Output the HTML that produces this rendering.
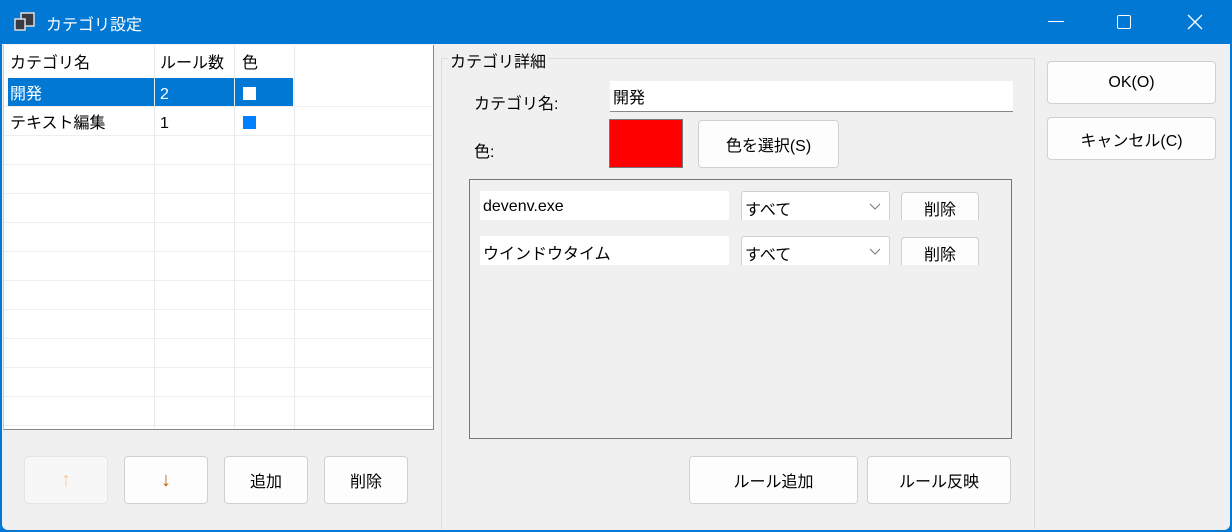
<!DOCTYPE html>
<html><head><meta charset="utf-8"><style>
*{box-sizing:border-box;margin:0;padding:0}
body{width:1232px;height:532px;overflow:hidden;background:#0078d4;font-family:"Liberation Sans","Noto Sans CJK JP",sans-serif;font-size:16px;color:#000;position:relative}
.abs{position:absolute}
.win{position:absolute;left:2px;top:44px;width:1228px;height:486px;background:#f0f0f0;border-radius:0 0 6px 6px}
.btn{position:absolute;background:#fdfdfd;border:1px solid #d0d0d0;border-radius:4px;display:flex;align-items:center;justify-content:center;font-size:16px}
.inp{position:absolute;background:#fff;border-bottom:1px solid #888;display:flex;align-items:center;padding-left:3px}
.cell{position:absolute;height:29px;line-height:29px;padding-left:8px}
.hl{position:absolute;left:4px;width:428px;height:1px;background:#eee}
</style></head><body>
<svg class="abs" style="left:14px;top:12px" width="22" height="20" viewBox="0 0 22 20"><rect x="7" y="1" width="13" height="13" fill="#3a3a44" stroke="#ddd" stroke-width="1.5"/><rect x="1" y="7" width="10" height="11" fill="#3a3a44" stroke="#ddd" stroke-width="1.5"/></svg>
<div class="abs" style="left:46px;top:11px;color:#fff;font-size:16px">カテゴリ設定</div>
<div class="abs" style="left:1048px;top:21px;width:16px;height:1px;background:#fff"></div>
<div class="abs" style="left:1117px;top:15px;width:14px;height:14px;border:1.5px solid #fff;border-radius:2px"></div>
<svg class="abs" style="left:1187px;top:14px" width="16" height="16"><path d="M1 1L15 15M15 1L1 15" stroke="#fff" stroke-width="1.3"/></svg>
<div class="win"></div>
<div class="abs" style="left:3px;top:45px;width:431px;height:385px;background:#fff;border-right:1px solid #888;border-bottom:1px solid #888;border-left:1px solid #ccc"></div>
<div class="abs" style="left:8px;top:78px;width:285px;height:29px;background:#0078d4"></div>
<div class="abs" style="left:154px;top:46px;width:1px;height:383px;background:#eaeaea"></div>
<div class="abs" style="left:234px;top:46px;width:1px;height:383px;background:#eaeaea"></div>
<div class="abs" style="left:294px;top:46px;width:1px;height:383px;background:#eaeaea"></div>
<div class="hl" style="top:106px"></div><div class="hl" style="top:135px"></div><div class="hl" style="top:164px"></div><div class="hl" style="top:193px"></div><div class="hl" style="top:222px"></div><div class="hl" style="top:251px"></div><div class="hl" style="top:280px"></div><div class="hl" style="top:309px"></div><div class="hl" style="top:338px"></div><div class="hl" style="top:367px"></div><div class="hl" style="top:396px"></div><div class="hl" style="top:425px"></div>
<div class="cell" style="left:2px;top:49px">カテゴリ名</div>
<div class="cell" style="left:152px;top:49px">ルール数</div>
<div class="cell" style="left:234px;top:49px">色</div>
<div class="cell" style="left:2px;top:80px;color:#fff">開発</div>
<div class="cell" style="left:152px;top:80px;color:#fff">2</div>
<div class="abs" style="left:243px;top:87px;width:13px;height:13px;background:#fff"></div>
<div class="cell" style="left:2px;top:109px">テキスト編集</div>
<div class="cell" style="left:152px;top:109px">1</div>
<div class="abs" style="left:243px;top:116px;width:13px;height:13px;background:#0080ff"></div>
<div class="btn" style="left:24px;top:456px;width:84px;height:48px;background:#f7f7f7;border-color:#e5e5e5;color:#f4c9a0;font-size:20px">↑</div>
<div class="btn" style="left:124px;top:456px;width:84px;height:48px;color:#c0600a;font-size:20px">↓</div>
<div class="btn" style="left:224px;top:456px;width:84px;height:48px">追加</div>
<div class="btn" style="left:324px;top:456px;width:84px;height:48px">削除</div>
<div class="abs" style="left:441px;top:58px;width:594px;height:471px;border:1px solid #dcdcdc;border-bottom:none"></div>
<div class="abs" style="left:448px;top:48px;background:#f0f0f0;padding:0 2px;font-size:16px">カテゴリ詳細</div>
<div class="abs" style="left:474px;top:90px">カテゴリ名:</div>
<div class="inp" style="left:610px;top:81px;width:403px;height:31px">開発</div>
<div class="abs" style="left:474px;top:138px">色:</div>
<div class="abs" style="left:609px;top:119px;width:74px;height:49px;background:#f00;border:1px solid #777"></div>
<div class="btn" style="left:698px;top:120px;width:141px;height:48px">色を選択(S)</div>
<div class="abs" style="left:469px;top:179px;width:543px;height:260px;border:1px solid #777"></div>
<div class="inp" style="left:480px;top:191px;width:249px;height:29px;border:none;padding-top:3px">devenv.exe</div>
<div class="inp" style="left:741px;top:191px;width:149px;height:29px;border:1px solid #d0d0d0;border-bottom:none;border-radius:3px 3px 0 0;padding-top:3px">すべて</div>
<svg class="abs" style="left:869px;top:203px" width="12" height="8"><path d="M1 1L6 6L11 1" stroke="#777" fill="none"/></svg>
<div class="btn" style="left:901px;top:192px;width:78px;height:28px;border-bottom:none;border-radius:4px 4px 0 0;padding-top:3px">削除</div>
<div class="inp" style="left:480px;top:236px;width:249px;height:29px;border:none;padding-top:3px">ウインドウタイム</div>
<div class="inp" style="left:741px;top:236px;width:149px;height:29px;border:1px solid #d0d0d0;border-bottom:none;border-radius:3px 3px 0 0;padding-top:3px">すべて</div>
<svg class="abs" style="left:869px;top:248px" width="12" height="8"><path d="M1 1L6 6L11 1" stroke="#777" fill="none"/></svg>
<div class="btn" style="left:901px;top:237px;width:78px;height:28px;border-bottom:none;border-radius:4px 4px 0 0;padding-top:3px">削除</div>
<div class="btn" style="left:689px;top:456px;width:169px;height:48px">ルール追加</div>
<div class="btn" style="left:867px;top:456px;width:144px;height:48px">ルール反映</div>
<div class="btn" style="left:1047px;top:61px;width:169px;height:43px">OK(O)</div>
<div class="btn" style="left:1047px;top:117px;width:169px;height:43px">キャンセル(C)</div>
</body></html>
